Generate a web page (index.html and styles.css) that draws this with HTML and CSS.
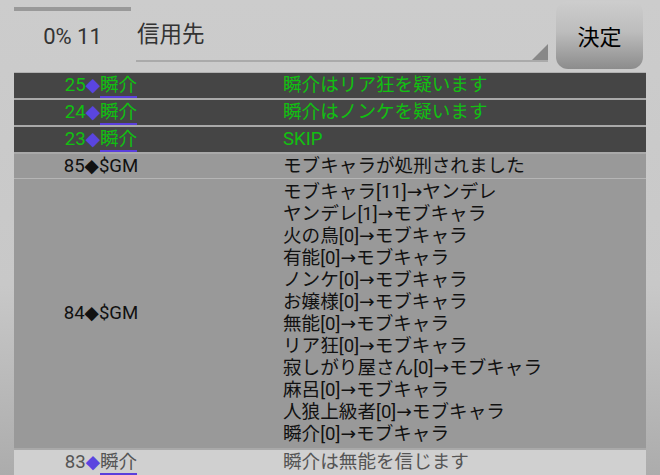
FILE: index.html
```html
<!DOCTYPE html>
<html>
<head>
	<title>Log</title>
	<link rel="stylesheet" href="styles.css">
</head>
<body>
	<div id="header">
		<div class="progress">
			<div class="progress-bar"></div>
			<div class="progress-label">0% 11</div>
		</div>
		<div class="select">
			<span class="select-text">信用先</span>
			<span class="select-arrow"></span>
		</div>
		<button class="decide">決定</button>
	</div>
	<div id="log">
		<div class="row dark first">
			<div class="who"><span class="num">25</span><span class="mark">◆</span><span class="name">瞬介</span></div>
			<div class="msg">瞬介はリア狂を疑います</div>
		</div>
		<div class="row dark">
			<div class="who"><span class="num">24</span><span class="mark">◆</span><span class="name">瞬介</span></div>
			<div class="msg">瞬介はノンケを疑います</div>
		</div>
		<div class="row dark">
			<div class="who"><span class="num">23</span><span class="mark">◆</span><span class="name">瞬介</span></div>
			<div class="msg">SKIP</div>
		</div>
		<div class="row gm">
			<div class="who">85◆$GM</div>
			<div class="msg">モブキャラが処刑されました</div>
		</div>
		<div class="row gm tall">
			<div class="who">84◆$GM</div>
			<div class="msg">
				<div>モブキャラ[11]→ヤンデレ</div>
				<div>ヤンデレ[1]→モブキャラ</div>
				<div>火の鳥[0]→モブキャラ</div>
				<div>有能[0]→モブキャラ</div>
				<div>ノンケ[0]→モブキャラ</div>
				<div>お嬢様[0]→モブキャラ</div>
				<div>無能[0]→モブキャラ</div>
				<div>リア狂[0]→モブキャラ</div>
				<div>寂しがり屋さん[0]→モブキャラ</div>
				<div>麻呂[0]→モブキャラ</div>
				<div>人狼上級者[0]→モブキャラ</div>
				<div>瞬介[0]→モブキャラ</div>
			</div>
		</div>
		<div class="row light">
			<div class="who"><span class="num">83</span><span class="mark">◆</span><span class="name">瞬介</span></div>
			<div class="msg">瞬介は無能を信じます</div>
		</div>
	</div>
</body>
</html>
```

FILE: styles.css
```css
html {
	height: 100%;
}

body {
	margin: 0;
	min-height: 100%;
	background: linear-gradient(#cccccc 0%, #c8c8c8 60%, #acacac 100%);
	font-family: Roboto, "DejaVu Sans", "Noto Sans CJK JP", sans-serif;
	overflow: hidden;
}

#header {
	display: flex;
	align-items: flex-start;
	height: 72px;
	padding: 0 17px 0 14px;
}

.progress {
	width: 117px;
	padding-top: 7px;
}

.progress-bar {
	height: 4px;
	background-color: #999;
}

.progress-label {
	text-align: center;
	font-size: 22px;
	color: #333;
	margin-top: 13px;
}

.select {
	position: relative;
	width: 412px;
	height: 60px;
	margin-left: 5px;
	border-bottom: 2px solid #aaa;
}

.select-text {
	display: block;
	padding: 16px 0 0 1px;
	font-size: 22.5px;
	color: #333;
}

.select-arrow {
	position: absolute;
	right: 0;
	bottom: 0;
	width: 0;
	height: 0;
	border-left: 16px solid transparent;
	border-bottom: 16px solid #888;
}

.decide {
	width: 87px;
	height: 68px;
	margin: 1px 0 0 8px;
	border: none;
	border-radius: 12px;
	background: linear-gradient(#cdcdcd 0%, #bdbdbd 45%, #8c8c8c 100%);
	font-family: "Noto Sans CJK JP", sans-serif;
	font-size: 22px;
	color: #000;
	padding: 0;
}

#log {
	margin: 0 14px;
	font-size: 18.6px;
}

.row {
	display: grid;
	grid-template-columns: 174px 1fr;
	border-top: 2px solid #a9a9a9;
	line-height: 24px;
}

.row.first {
	border-top: 1px solid #b0b0b0;
}

.who {
	text-align: center;
	align-self: center;
	white-space: nowrap;
}

.msg {
	padding-left: 95px;
	white-space: nowrap;
}

.dark {
	background-color: #454545;
	color: #11c011;
}

.gm {
	background-color: #999;
	color: #111;
}

.tall {
	border-top: 1px solid #b5b5b5;
	line-height: 22px;
	padding: 2px 0 3px;
}

.light {
	background-color: #d0d0d0;
	color: #555;
	border-bottom: 2px solid #888;
}

.mark {
	color: #5a45e0;
}

.name {
	border-bottom: 2px solid #5a3fdc;
	line-height: 21px;
	display: inline-block;
}
```
